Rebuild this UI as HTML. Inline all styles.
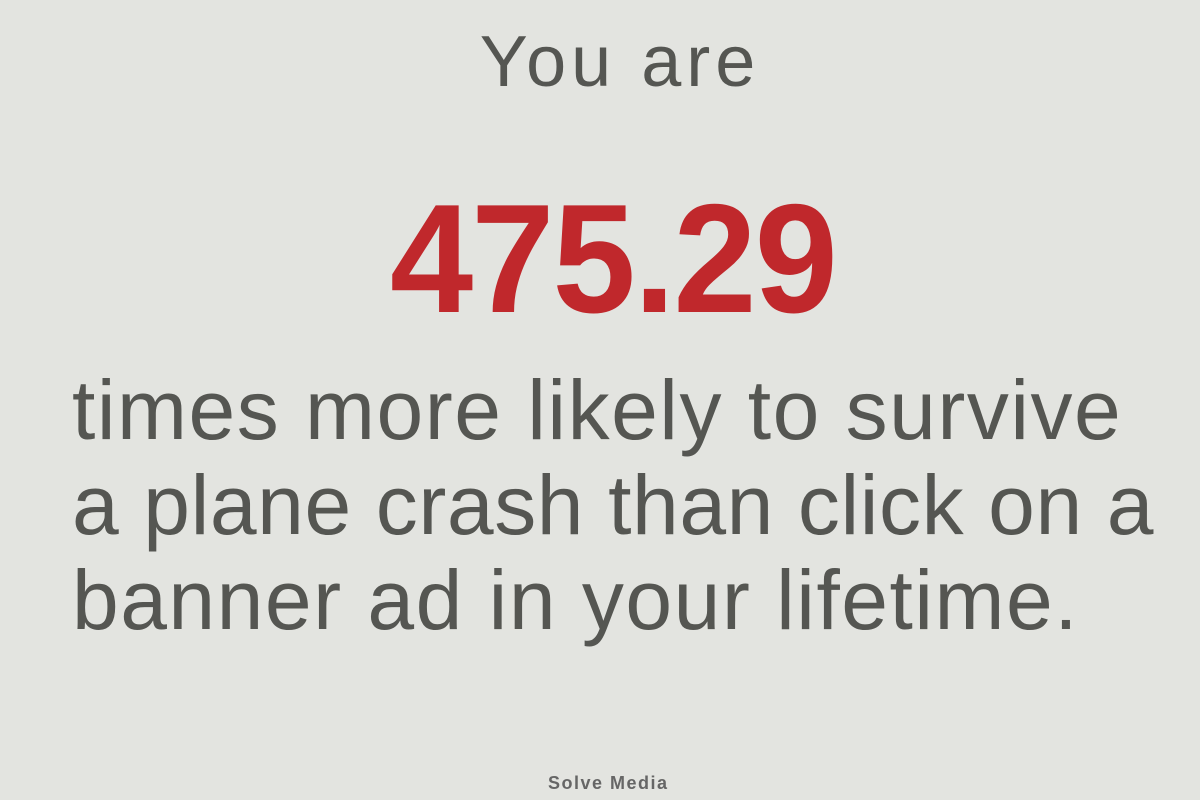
<!DOCTYPE html>
<html><head><style>
html,body{margin:0;padding:0;}
body{width:1200px;height:800px;background:#e3e4e0;position:relative;overflow:hidden;font-family:"Liberation Sans",sans-serif;color:#555652;}
.t{position:absolute;white-space:nowrap;}
#you{left:0;width:1240px;text-align:center;top:21px;font-size:72px;letter-spacing:5px;}
#num{left:390px;top:170px;font-size:155px;font-weight:bold;color:#c0282c;transform-origin:0 0;transform:scaleX(0.965);letter-spacing:-2px;}
.l{left:72px;font-size:84px;letter-spacing:1.5px;}
#sm{left:548px;top:773px;font-size:18px;font-weight:bold;color:#666;letter-spacing:1.5px;}
</style></head><body>
<div class="t" id="you">You are</div>
<div class="t" id="num">475.29</div>
<div class="t l" style="top:362px">times more likely to survive</div>
<div class="t l" style="top:457px;letter-spacing:0.6px">a plane crash than click on a</div>
<div class="t l" style="top:552px">banner ad in your lifetime.</div>
<div class="t" id="sm">Solve Media</div>
</body></html>
